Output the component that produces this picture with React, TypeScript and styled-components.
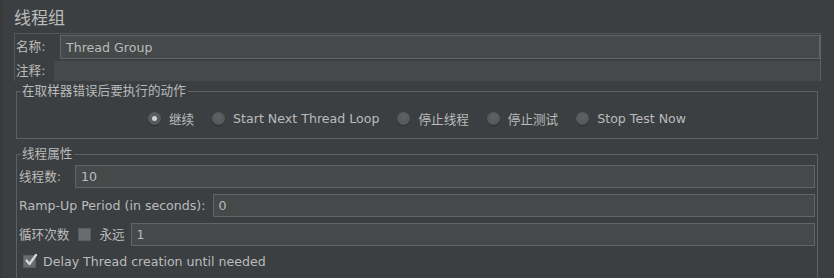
import React from "react";
import styled, { createGlobalStyle } from "styled-components";

const Global = createGlobalStyle`
  html, body { margin: 0; padding: 0; background: #3c3f41; }
  body { width: 834px; height: 278px; overflow: hidden; }
  * { box-sizing: border-box; }
`;

const FONT = `"DejaVu Sans", "Noto Sans CJK SC", sans-serif`;

const Page = styled.div`
  width: 834px;
  height: 278px;
  overflow: hidden;
  background: #3c3f41;
  color: #bbbbbb;
  font-family: ${FONT};
  font-size: 12.6px;
  padding: 7px 13px 0 11px;
  border-left: 3px solid #383a3c;
`;

const Title = styled.div`
  font-size: 17px;
  line-height: 22px;
  height: 26px;
  color: #bbbbbb;
`;

const NamePanel = styled.div`
  border-top: 1px solid #55585a;
  border-left: 1px solid #55585a;
  border-right: 1px solid #5e6163;
  display: flex;
  flex-direction: column;
  gap: 2px;
  padding: 1px 0 0 1px;
`;

const Row = styled.div<{ $gap?: number; $h?: number }>`
  display: flex;
  align-items: center;
  gap: ${(p) => p.$gap ?? 0}px;
  height: ${(p) => p.$h ?? 24}px;
`;

const Label = styled.span<{ $w?: number; $mr?: number }>`
  white-space: nowrap;
  line-height: 16px;
  flex: none;
  width: ${(p) => (p.$w ? `${p.$w}px` : "auto")};
  margin-right: ${(p) => p.$mr ?? 0}px;
`;

const TextField = styled.div<{ $bordered?: boolean }>`
  flex: 1;
  align-self: stretch;
  background: #45494a;
  border: ${(p) => (p.$bordered ? "1px solid #646464" : "none")};
  padding-left: 5px;
  display: flex;
  align-items: center;
  color: #bbbbbb;
  white-space: nowrap;
`;

const Fieldset = styled.fieldset<{ $mt: number }>`
  margin: ${(p) => p.$mt}px 3px 0 2px;
  border: 1px solid #5e6163;
  padding: 0;
  min-width: 0;
`;

const Legend = styled.legend`
  margin-left: 4px;
  padding: 0 2px 0 1px;
  line-height: 16px;
  color: #bbbbbb;
`;

const RadioRow = styled.div`
  display: flex;
  justify-content: center;
  align-items: center;
  height: 39px;
`;

const RadioItem = styled.label`
  display: flex;
  align-items: center;
  gap: 8px;
  margin: 0 9px;
  white-space: nowrap;
`;

const RadioDot = styled.span<{ $on?: boolean }>`
  width: 13px;
  height: 13px;
  border-radius: 50%;
  background: radial-gradient(circle at 50% 40%, #5f6264 0%, #515456 100%);
  box-shadow: 0 1px 1px rgba(0, 0, 0, 0.35);
  display: flex;
  align-items: center;
  justify-content: center;
  &::after {
    content: "";
    display: ${(p) => (p.$on ? "block" : "none")};
    width: 5px;
    height: 5px;
    border-radius: 50%;
    background: #cfd1d2;
  }
`;

const PropsBody = styled.div`
  display: flex;
  flex-direction: column;
  gap: 6px;
  padding: 3px 2px 20px 2px;
`;

const Check = styled.span<{ $ml?: number; $mr?: number }>`
  width: 13px;
  height: 13px;
  background: #696c6e;
  border: 1px solid #5a5d5f;
  display: inline-flex;
  position: relative;
  flex: none;
  margin-left: ${(p) => p.$ml ?? 0}px;
  margin-right: ${(p) => p.$mr ?? 0}px;
`;

const CheckRow = styled.label`
  display: flex;
  align-items: center;
  gap: 7px;
  height: 18px;
  padding-left: 4px;
`;

const CheckMark = () => (
  <svg width="14" height="14" viewBox="0 0 14 14" style={{ position: "absolute", left: 0, top: -3 }}>
    <path d="M2.5 7.5 L5.5 11 L12 2" fill="none" stroke="#d8d8d8" strokeWidth="2.2" strokeLinecap="round" strokeLinejoin="round" />
  </svg>
);

export default function App() {
  const options = ["继续", "Start Next Thread Loop", "停止线程", "停止测试", "Stop Test Now"];
  return (
    <>
      <Global />
      <Page>
        <Title>线程组</Title>
        <NamePanel>
          <Row $h={24}>
            <Label $w={44}>名称:</Label>
            <TextField $bordered>Thread Group</TextField>
          </Row>
          <Row $h={20}>
            <Label $w={38}>注释:</Label>
            <TextField />
          </Row>
        </NamePanel>
        <Fieldset $mt={2}>
          <Legend>在取样器错误后要执行的动作</Legend>
          <RadioRow>
            {options.map((o, i) => (
              <RadioItem key={o}>
                <RadioDot $on={i === 0} />
                {o}
              </RadioItem>
            ))}
          </RadioRow>
        </Fieldset>
        <Fieldset $mt={7}>
          <Legend>线程属性</Legend>
          <PropsBody>
            <Row $h={23}>
              <Label $w={56}>线程数:</Label>
              <TextField $bordered>10</TextField>
            </Row>
            <Row $h={23}>
              <Label $mr={7}>Ramp-Up Period (in seconds):</Label>
              <TextField $bordered>0</TextField>
            </Row>
            <Row $h={23}>
              <Label>循环次数</Label>
              <Check $ml={9} $mr={8} />
              <Label $mr={6}>永远</Label>
              <TextField $bordered>1</TextField>
            </Row>
            <CheckRow>
              <Check>
                <CheckMark />
              </Check>
              Delay Thread creation until needed
            </CheckRow>
          </PropsBody>
        </Fieldset>
      </Page>
    </>
  );
}
